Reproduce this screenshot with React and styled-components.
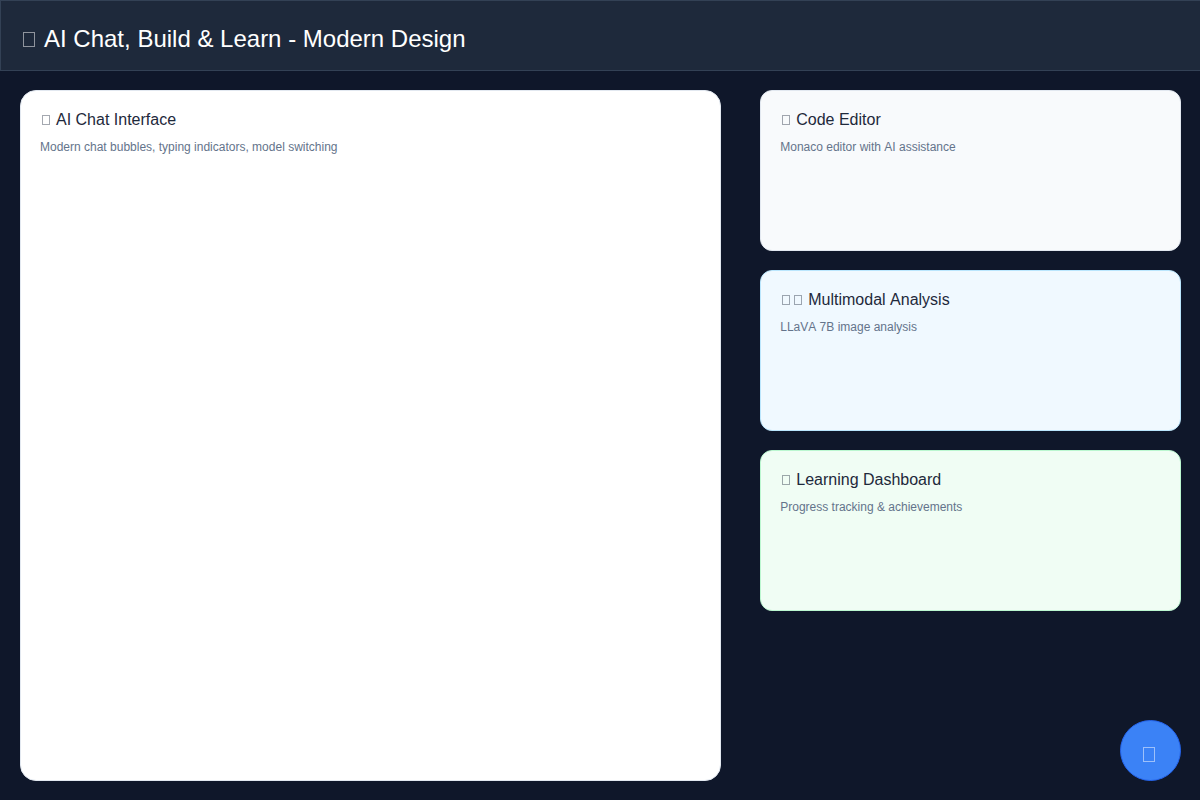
import React from 'react';
import styled, { createGlobalStyle } from 'styled-components';

const GlobalStyle = createGlobalStyle`
  *, *::before, *::after { box-sizing: border-box; }
  body {
    margin: 0;
    background: #0f172a;
    font-family: "Liberation Sans", Arial, sans-serif;
    font-kerning: none;
  }
`;

const Page = styled.div`
  min-height: 100vh;
  display: flex;
  flex-direction: column;
`;

const Header = styled.header`
  padding: 24px 20px 18px 19px;
  background: #1e293b;
  border: 1px solid #334155;
  border-right: 0;
`;

const Title = styled.h1`
  margin: 0;
  display: flex;
  gap: 6px;
  color: #ffffff;
  font-size: 24px;
  font-weight: 400;
  line-height: 27px;
`;

const Workspace = styled.main`
  flex: 1;
  display: grid;
  grid-template-columns: 5fr 3fr;
  column-gap: 39px;
  padding: 19px 19px 19px 20px;
`;

const SideColumn = styled.div`
  display: flex;
  flex-direction: column;
  gap: 19px;
`;

const tones = {
  chat: { fill: '#ffffff', line: '#e2e8f0' },
  code: { fill: '#f8fafc', line: '#e2e8f0' },
  vision: { fill: '#f0f9ff', line: '#bae6fd' },
  learn: { fill: '#f0fdf4', line: '#bbf7d0' },
};

const Card = styled.section`
  min-height: 161px;
  padding: 20px 19px 19px;
  background: ${({ $tone }) => tones[$tone].fill};
  border: 1px solid ${({ $tone }) => tones[$tone].line};
  border-radius: ${({ $tone }) => ($tone === 'chat' ? 16 : 12)}px;
`;

const CardTitle = styled.h2`
  margin: 0;
  display: flex;
  gap: 4px;
  color: #1e293b;
  font-size: 16px;
  font-weight: 400;
  line-height: 18px;
`;

const Glyphs = styled.span`
  display: flex;
`;

const CardText = styled.p`
  margin: 11px 0 0;
  color: #64748b;
  font-size: 12px;
  line-height: 14px;
`;

const ChatButton = styled.button`
  position: fixed;
  right: 19px;
  bottom: 19px;
  width: 61px;
  height: 61px;
  padding: 19px;
  display: flex;
  color: #ffffff;
  background: #3b82f6;
  border: 1px solid #2563eb;
  border-radius: 50%;
  cursor: pointer;
`;

const GlyphSvg = styled.svg`
  flex: none;
  display: block;
  opacity: ${({ $faint }) => ($faint ? 0.4 : 0.5)};
`;

function Glyph({ large }) {
  return large ? (
    <GlyphSvg width="18" height="27" viewBox="0 0 18 27" aria-hidden="true">
      <rect x="3.5" y="7.5" width="11" height="14" fill="none" stroke="currentColor" />
    </GlyphSvg>
  ) : (
    <GlyphSvg $faint width="12" height="18" viewBox="0 0 12 18" aria-hidden="true">
      <rect x="2.5" y="4.5" width="7" height="9" fill="none" stroke="currentColor" />
    </GlyphSvg>
  );
}

function Panel({ tone, title, text, glyphs = 1 }) {
  return (
    <Card $tone={tone}>
      <CardTitle>
        <Glyphs>
          {Array.from({ length: glyphs }, (_, i) => <Glyph key={i} />)}
        </Glyphs>
        <span>{title}</span>
      </CardTitle>
      <CardText>{text}</CardText>
    </Card>
  );
}

export default function App() {
  return (
    <Page>
      <GlobalStyle />
      <Header>
        <Title>
          <Glyph large />
          <span>AI Chat, Build &amp; Learn - Modern Design</span>
        </Title>
      </Header>
      <Workspace>
        <Panel
          tone="chat"
          title="AI Chat Interface"
          text="Modern chat bubbles, typing indicators, model switching"
        />
        <SideColumn>
          <Panel tone="code" title="Code Editor" text="Monaco editor with AI assistance" />
          <Panel tone="vision" title="Multimodal Analysis" text="LLaVA 7B image analysis" glyphs={2} />
          <Panel tone="learn" title="Learning Dashboard" text="Progress tracking & achievements" />
        </SideColumn>
      </Workspace>
      <ChatButton type="button" aria-label="Open chat">
        <Glyph large />
      </ChatButton>
    </Page>
  );
}
